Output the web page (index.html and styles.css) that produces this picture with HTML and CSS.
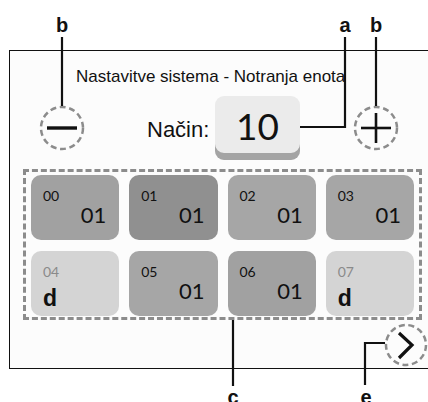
FILE: index.html
```html
<!DOCTYPE html>
<html>
<head>
<meta charset="utf-8">
<link rel="stylesheet" href="styles.css">
</head>
<body>
<div class="page">
  <div class="panel">
    <div class="title">Nastavitve sistema - Notranja enota</div>
    <div class="controls">
      <div class="round-btn minus">
        <svg width="46" height="46" viewBox="0 0 46 46"><circle cx="23" cy="23" r="21" class="dash"/><line x1="8" y1="23" x2="38" y2="23" class="glyph"/></svg>
      </div>
      <div class="mode-label">Način:</div>
      <div class="mode-value">10</div>
      <div class="round-btn plus">
        <svg width="46" height="46" viewBox="0 0 46 46"><circle cx="23" cy="23" r="21" class="dash"/><line x1="8" y1="23" x2="38" y2="23" class="glyph thin"/><line x1="23" y1="8" x2="23" y2="38" class="glyph thin"/></svg>
      </div>
    </div>
    <div class="grid-box">
      <div class="tiles">
        <div class="tile t-mid"><span class="num">00</span><span class="val">01</span></div>
        <div class="tile t-dark"><span class="num">01</span><span class="val">01</span></div>
        <div class="tile t-light"><span class="num">02</span><span class="val">01</span></div>
        <div class="tile t-light"><span class="num">03</span><span class="val">01</span></div>
        <div class="tile t-off"><span class="num">04</span><span class="d">d</span></div>
        <div class="tile t-light"><span class="num">05</span><span class="val">01</span></div>
        <div class="tile t-mid"><span class="num">06</span><span class="val">01</span></div>
        <div class="tile t-off"><span class="num">07</span><span class="d">d</span></div>
      </div>
    </div>
    <div class="footer">
      <div class="round-btn next">
        <svg width="44" height="44" viewBox="0 0 44 44"><circle cx="22" cy="22" r="20" class="dash"/><polyline points="15,10 28,22 15,35" class="chev"/></svg>
      </div>
    </div>
  </div>

  <svg class="callouts" width="428" height="402" viewBox="0 0 428 402">
    <g class="lead">
      <line x1="62" y1="37" x2="62" y2="106"/>
      <line x1="376" y1="37" x2="376" y2="106"/>
      <polyline points="300,127 345,127 345,37"/>
      <line x1="233" y1="320" x2="233" y2="386"/>
      <polyline points="385,343 365,343 365,385"/>
    </g>
    <text x="62" y="32" class="lbl">b</text>
    <text x="345" y="32" class="lbl">a</text>
    <text x="376" y="32" class="lbl">b</text>
    <text x="233" y="404" class="lbl">c</text>
    <text x="366" y="404" class="lbl">e</text>
  </svg>
</div>
</body>
</html>
```

FILE: styles.css
```css
html, body {
  margin: 0;
  padding: 0;
  background: #ffffff;
}

.page {
  position: relative;
  width: 428px;
  height: 402px;
  overflow: hidden;
  font-family: "Liberation Sans", Arial, sans-serif;
  color: #111;
}

.panel {
  margin: 50px 0 0 9px;
  width: 440px;
  height: 317px;
  border: 1px solid #111;
  border-right: none;
  background: #fcfcfc;
}

.title {
  padding: 16px 0 0 66px;
  font-size: 17px;
  line-height: 20px;
  color: #111;
}

.controls {
  display: flex;
  align-items: center;
  height: 64px;
  margin-top: 9px;
}

.round-btn {
  width: 46px;
  height: 46px;
  flex: none;
}

.round-btn svg {
  display: block;
}

.dash {
  fill: none;
  stroke: #8c8c8c;
  stroke-width: 2.5;
  stroke-dasharray: 6 3.6;
}

.glyph {
  stroke: #111;
  stroke-width: 3.4;
}

.glyph.thin {
  stroke-width: 2.6;
}

.minus {
  margin-left: 29px;
}

.mode-label {
  margin-left: 62px;
  padding-top: 4px;
  font-size: 22px;
  width: 68px;
}

.mode-value {
  width: 85px;
  height: 64px;
  box-sizing: border-box;
  padding-bottom: 6px;
  border-radius: 9px;
  background: #ebebeb;
  box-shadow: inset 0 -7px 0 #a4a4a4;
  display: flex;
  align-items: center;
  justify-content: center;
  font-family: Lato, "DejaVu Sans", sans-serif;
  font-weight: 400;
  font-size: 37px;
  color: #111;
}

.plus {
  margin-left: 53px;
}

.grid-box {
  margin: 9px 0 0 13px;
  width: 399px;
  height: 151px;
  box-sizing: border-box;
  border: 3px dashed #8c8c8c;
  padding: 3px 5px 0 5px;
}

.tiles {
  display: grid;
  grid-template-columns: repeat(4, 1fr);
  grid-template-rows: 65px 65px;
  column-gap: 10px;
  row-gap: 11px;
}

.tile {
  border-radius: 10px;
  display: flex;
  flex-direction: column;
  padding: 14px 13px 0 12px;
  box-sizing: border-box;
}

.t-mid { background: #a1a1a1; }
.t-dark { background: #909090; }
.t-light { background: #a6a6a6; }
.t-off { background: #d4d4d4; }

.num {
  font-family: Lato, "DejaVu Sans", sans-serif;
  font-size: 14px;
  line-height: 14px;
  color: #111;
}

.t-off .num {
  color: #8a8a8a;
}

.val {
  align-self: flex-end;
  font-family: Lato, "DejaVu Sans", sans-serif;
  font-size: 22px;
  line-height: 24px;
  color: #111;
}

.d {
  margin-top: 7px;
  font-family: "Liberation Sans", Arial, sans-serif;
  font-weight: bold;
  font-size: 23px;
  line-height: 24px;
  color: #111;
}

.footer {
  display: flex;
  margin-top: 3px;
  padding-left: 374px;
}

.next {
  width: 44px;
  height: 44px;
}

.chev {
  fill: none;
  stroke: #111;
  stroke-width: 3.2;
  stroke-linejoin: miter;
}

.callouts {
  position: absolute;
  left: 0;
  top: 0;
  pointer-events: none;
}

.lead line, .lead polyline {
  stroke: #111;
  stroke-width: 2.2;
  fill: none;
}

.lbl {
  font-family: "Liberation Sans", Arial, sans-serif;
  font-weight: bold;
  font-size: 20px;
  text-anchor: middle;
  fill: #111;
}
```
